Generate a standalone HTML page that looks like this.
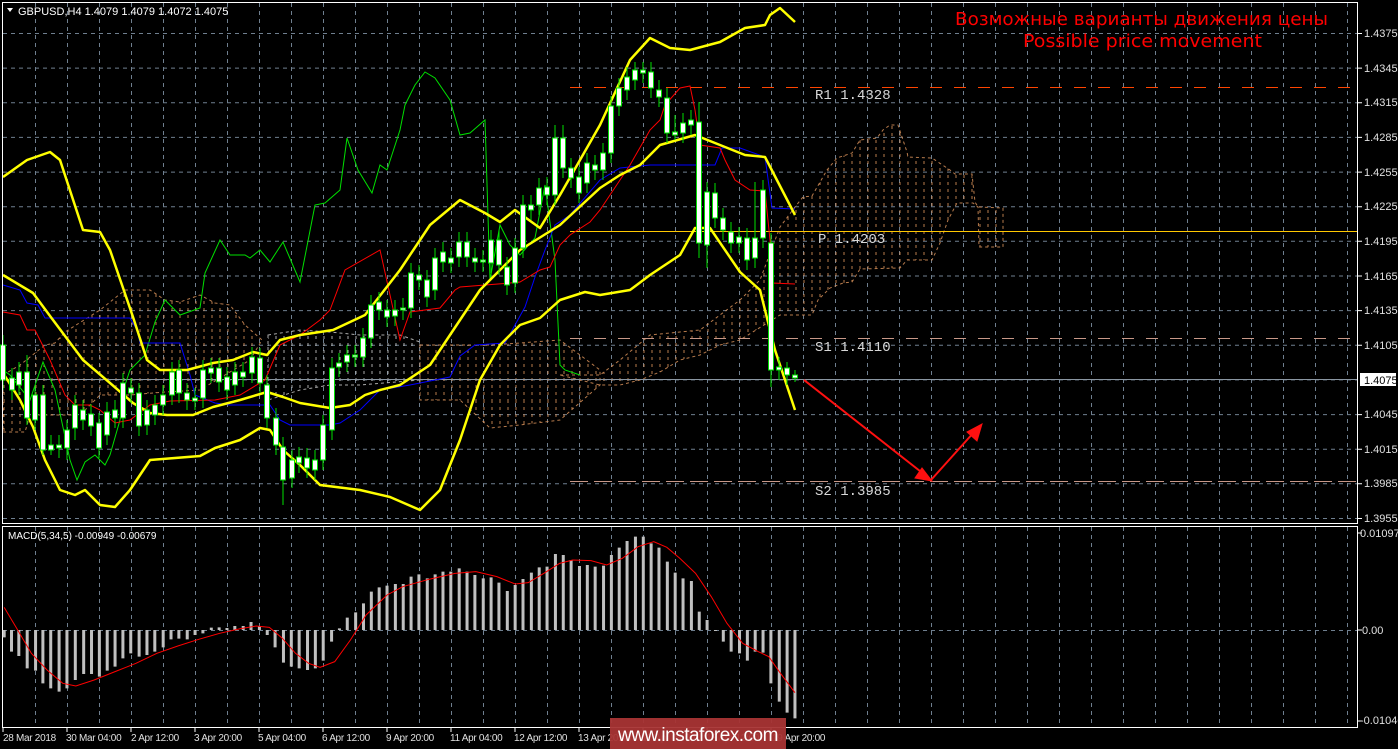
<!DOCTYPE html>
<html><head><meta charset="utf-8"><style>
html,body{margin:0;padding:0;background:#000;width:1398px;height:749px;overflow:hidden}
svg{display:block}
text{font-family:"Liberation Sans",sans-serif}
text.mono{font-family:"Liberation Mono","DejaVu Sans Mono",monospace}
text.dv{font-family:"DejaVu Sans","Liberation Sans",sans-serif}
</style></head><body>
<svg width="1398" height="749" viewBox="0 0 1398 749" xmlns="http://www.w3.org/2000/svg">
<defs>
<pattern id="hp" width="8" height="400" patternUnits="userSpaceOnUse"><line x1="4" y1="0" x2="4" y2="400" stroke="#d8915a" stroke-width="1" stroke-dasharray="3 4"/></pattern>
<pattern id="hw" width="8" height="400" patternUnits="userSpaceOnUse"><line x1="4" y1="0" x2="4" y2="400" stroke="#c8c8c8" stroke-width="1" stroke-dasharray="3 4"/></pattern>
</defs>
<rect width="1398" height="749" fill="#000"/>
<!-- grid main -->
<g stroke="#6f7f8f" stroke-width="1" stroke-dasharray="4 4">
<path d="M3 33.5H1357M3 68.1H1357M3 102.8H1357M3 137.4H1357M3 172.1H1357M3 206.7H1357M3 241.3H1357M3 276H1357M3 310.6H1357M3 345.3H1357M3 379.9H1357M3 414.6H1357M3 449.2H1357M3 483.8H1357M3 518.5H1357"/>
<path d="M35.5 3V523M67.5 3V523M99.5 3V523M131.5 3V523M163.5 3V523M195.5 3V523M227.5 3V523M259.5 3V523M291.5 3V523M323.5 3V523M355.5 3V523M387.5 3V523M419.5 3V523M451.5 3V523M483.5 3V523M515.5 3V523M547.5 3V523M579.5 3V523M611.5 3V523M643.5 3V523M675.5 3V523M707.5 3V523M739.5 3V523M771.5 3V523M803.5 3V523M835.5 3V523M867.5 3V523M899.5 3V523M931.5 3V523M963.5 3V523M995.5 3V523M1027.5 3V523M1059.5 3V523M1091.5 3V523M1123.5 3V523M1155.5 3V523M1187.5 3V523M1219.5 3V523M1251.5 3V523M1283.5 3V523M1315.5 3V523M1347.5 3V523"/>
<path d="M35.5 527V727M67.5 527V727M99.5 527V727M131.5 527V727M163.5 527V727M195.5 527V727M227.5 527V727M259.5 527V727M291.5 527V727M323.5 527V727M355.5 527V727M387.5 527V727M419.5 527V727M451.5 527V727M483.5 527V727M515.5 527V727M547.5 527V727M579.5 527V727M611.5 527V727M643.5 527V727M675.5 527V727M707.5 527V727M739.5 527V727M771.5 527V727M803.5 527V727M835.5 527V727M867.5 527V727M899.5 527V727M931.5 527V727M963.5 527V727M995.5 527V727M1027.5 527V727M1059.5 527V727M1091.5 527V727M1123.5 527V727M1155.5 527V727M1187.5 527V727M1219.5 527V727M1251.5 527V727M1283.5 527V727M1315.5 527V727M1347.5 527V727"/>
<path d="M3 630.5H1357"/>
</g>
<!-- clouds -->
<g stroke="#d8915a" stroke-width="1" stroke-dasharray="3 3" opacity="0.85">
<polygon fill="url(#hp)" points="3,375 20,365 30,357 45,345 55,343 65,332 100,310 125,290 150,290 165,300 180,302 200,295 215,303 230,305 245,325 262,340 250,360 200,390 165,392 130,395 100,395 80,415 30,415 25,432 3,432"/>
<polygon fill="url(#hw)" stroke="#c8c8c8" points="268,335 300,330 330,332 360,335 400,335 420,342 420,380 360,385 330,385 300,390 268,400"/>
<polygon fill="url(#hp)" points="420,345 450,345 490,345 520,343 560,340 600,370 600,385 560,420 520,425 490,428 460,400 420,400"/>
<polygon fill="url(#hp)" points="560,375 600,375 620,360 650,335 700,330 720,315 740,300 760,280 780,227 795,207 803,197 812,196 827,170 837,158 852,153 860,140 877,138 883,130 890,125 898,125 907,152 908,157 932,158 950,170 955,174 972,174 975,202 978,207 1003,208 1003,247 979,247 978,207 973,203 957,203 948,220 940,243 932,260 907,260 900,268 860,269 852,282 843,283 830,288 818,300 812,315 780,315 740,340 720,345 700,355 680,360 660,372 640,380 620,385 600,385"/>
</g>
<!-- levels -->
<path d="M570 87.5H1357" stroke="#ff4500" stroke-width="1" stroke-dasharray="12 12"/>
<path d="M570 231.5H1357" stroke="#ffc800" stroke-width="1"/>
<path d="M570 338.5H1357" stroke="#c89888" stroke-width="1" stroke-dasharray="12 12"/>
<path d="M570 481.5H1357" stroke="#c89888" stroke-width="1" stroke-dasharray="18 6"/>
<path d="M3 379.5H1357" stroke="#8a96a2" stroke-width="1"/>
<!-- green chikou -->
<polyline fill="none" stroke="#00e000" stroke-width="1" points="3,370 10,375 30,400 43,362 55,390 70,460 77,480 85,462 95,455 105,465 110,455 120,420 125,385 130,370 145,355 155,322 165,300 180,315 200,308 205,273 220,240 230,255 245,255 250,258 260,250 270,262 283,242 300,282 315,205 325,203 340,190 347,138 358,170 372,193 380,165 387,170 400,130 405,105 415,85 425,72 435,78 450,100 460,135 470,133 485,120 490,280 500,225 510,245 520,255 535,238 545,185 555,260 560,365 565,370 580,375"/>
<!-- blue kijun -->
<polyline fill="none" stroke="#0000ff" stroke-width="1" points="3,285 20,290 27,303 38,305 45,318 130,318 137,330 140,343 180,343 190,375 195,395 215,403 230,405 270,405 280,420 290,425 330,425 340,423 360,410 380,390 410,385 450,377 460,356 475,345 505,343 515,325 525,307 535,277 545,250 555,225 570,215 600,180 620,168 650,165 715,165 722,148 740,148 765,157 772,208 795,209"/>
<!-- red tenkan -->
<polyline fill="none" stroke="#ff0000" stroke-width="1" points="3,312 20,315 27,330 35,330 50,360 65,395 75,405 90,405 100,410 115,423 130,420 150,405 170,401 215,400 240,395 265,380 280,345 300,335 320,320 330,310 345,270 380,250 400,340 410,312 440,308 455,290 460,287 510,283 520,282 540,270 550,267 560,245 570,235 590,222 600,210 620,180 630,165 650,130 660,120 665,105 680,88 690,86 695,110 700,145 720,148 725,160 735,180 750,190 765,191 770,240 772,283 795,284"/>
<!-- yellow bands -->
<g fill="none" stroke="#ffff00" stroke-width="2.5" stroke-linejoin="round">
<polyline points="3,177 27,160 50,152 60,160 83,230 100,232 110,250 133,317 147,360 160,370 187,370 213,363 233,360 253,352 267,355 280,340 300,335 333,330 365,315 400,270 430,225 460,200 485,213 500,222 515,210 540,228 560,195 600,125 630,60 650,38 670,48 690,50 720,42 745,28 765,25 770,15 780,8 795,22"/>
<polyline points="3,275 33,293 53,320 83,360 110,383 133,403 150,413 167,415 193,415 213,407 240,400 267,392 283,397 300,403 330,408 350,405 365,395 380,390 400,385 430,365 480,290 520,250 560,225 600,188 620,175 640,165 660,145 695,135 720,145 745,155 765,157 795,215"/>
<polyline points="3,373 20,400 33,427 45,460 60,490 75,495 85,490 100,505 115,507 130,490 150,460 175,458 200,456 215,448 240,440 260,428 270,430 283,450 300,465 320,485 360,490 390,497 420,510 440,490 460,440 480,380 500,345 520,325 540,318 560,300 585,292 600,295 630,290 650,275 680,255 695,228 710,228 740,272 760,290 775,350 795,410"/>
</g>
<!-- candle wicks -->
<path stroke="#00e000" stroke-width="1" fill="none" d="M3 335V390M12 368V400M19 362V395M27 355V425M35 385V430M43 385V455M51 435V455M59 435V458M67 420V460M75 395V440M83 400V430M91 404V436M99 413V458M107 402V445M115 400V428M123 373V428M131 378V403M139 383V436M147 400V435M155 395V425M163 385V415M172 362V405M179 360V403M187 383V410M195 388V410M203 360V408M211 358V383M219 358V392M227 367V400M235 362V395M243 362V387M252 347V383M260 348V393M267 375V428M276 408V455M283 437V505M292 450V488M299 447V473M307 448V478M315 450V480M323 415V470M332 358V440M339 353V377M347 345V372M355 345V367M363 328V367M371 295V348M379 292V320M387 300V327M395 300V326M403 298V320M411 263V318M419 265V290M427 270V307M435 248V300M443 242V272M451 248V273M459 232V267M467 232V267M475 248V272M483 250V272M491 230V273M499 230V275M507 257V295M515 238V293M523 195V258M531 195V220M539 178V215M547 177V205M555 125V205M563 125V178M571 158V188M579 167V203M587 153V193M595 155V180M603 143V180M611 96V163M619 78V116M627 67V100M635 62V90M643 62V83M651 62V98M659 80V107M667 88V143M675 115V140M683 113V143M691 110V135M699 102V258M707 182V268M715 183V228M723 208V240M731 222V253M739 227V253M747 228V270M755 182V268M763 180V248M771 233V387M779 357V380M787 362V385M795 370V382"/>
<!-- candle bodies -->
<g fill="#fff" stroke="#00e000" stroke-width="1">
<rect x="0.5" y="345" width="5" height="35"/><rect x="9.5" y="378" width="5" height="12"/><rect x="16.5" y="372" width="5" height="13"/><rect x="24.5" y="372" width="5" height="46"/><rect x="32.5" y="395" width="5" height="25"/><rect x="40.5" y="395" width="5" height="55"/><rect x="48.5" y="445" width="5" height="5"/><rect x="56.5" y="445" width="5" height="3"/><rect x="64.5" y="430" width="5" height="18"/><rect x="72.5" y="405" width="5" height="23"/><rect x="80.5" y="410" width="5" height="10"/><rect x="88.5" y="414" width="5" height="12"/><rect x="96.5" y="423" width="5" height="25"/><rect x="104.5" y="412" width="5" height="23"/><rect x="112.5" y="410" width="5" height="8"/><rect x="120.5" y="383" width="5" height="35"/><rect x="128.5" y="388" width="5" height="5"/><rect x="136.5" y="393" width="5" height="33"/><rect x="144.5" y="410" width="5" height="15"/><rect x="152.5" y="405" width="5" height="10"/><rect x="160.5" y="395" width="5" height="10"/><rect x="169.5" y="372" width="5" height="23"/><rect x="176.5" y="370" width="5" height="23"/><rect x="184.5" y="393" width="5" height="7"/><rect x="192.5" y="398" width="5" height="3"/><rect x="200.5" y="370" width="5" height="28"/><rect x="208.5" y="368" width="5" height="5"/><rect x="216.5" y="368" width="5" height="14"/><rect x="224.5" y="377" width="5" height="13"/><rect x="232.5" y="372" width="5" height="13"/><rect x="240.5" y="372" width="5" height="5"/><rect x="249.5" y="357" width="5" height="16"/><rect x="257.5" y="358" width="5" height="25"/><rect x="264.5" y="385" width="5" height="33"/><rect x="273.5" y="418" width="5" height="27"/><rect x="280.5" y="447" width="5" height="33"/><rect x="289.5" y="460" width="5" height="18"/><rect x="296.5" y="457" width="5" height="6"/><rect x="304.5" y="458" width="5" height="10"/><rect x="312.5" y="460" width="5" height="10"/><rect x="320.5" y="425" width="5" height="35"/><rect x="329.5" y="368" width="5" height="62"/><rect x="336.5" y="363" width="5" height="4"/><rect x="344.5" y="355" width="5" height="7"/><rect x="352.5" y="355" width="5" height="2"/><rect x="360.5" y="338" width="5" height="19"/><rect x="368.5" y="305" width="5" height="33"/><rect x="376.5" y="302" width="5" height="8"/><rect x="384.5" y="310" width="5" height="7"/><rect x="392.5" y="310" width="5" height="6"/><rect x="400.5" y="308" width="5" height="2"/><rect x="408.5" y="273" width="5" height="35"/><rect x="416.5" y="275" width="5" height="5"/><rect x="424.5" y="280" width="5" height="17"/><rect x="432.5" y="258" width="5" height="32"/><rect x="440.5" y="252" width="5" height="10"/><rect x="448.5" y="258" width="5" height="5"/><rect x="456.5" y="242" width="5" height="15"/><rect x="464.5" y="242" width="5" height="15"/><rect x="472.5" y="258" width="5" height="4"/><rect x="480.5" y="260" width="5" height="2"/><rect x="488.5" y="240" width="5" height="23"/><rect x="496.5" y="240" width="5" height="25"/><rect x="504.5" y="267" width="5" height="18"/><rect x="512.5" y="248" width="5" height="35"/><rect x="520.5" y="205" width="5" height="43"/><rect x="528.5" y="205" width="5" height="5"/><rect x="536.5" y="188" width="5" height="17"/><rect x="544.5" y="187" width="5" height="8"/><rect x="552.5" y="138" width="5" height="57"/><rect x="560.5" y="138" width="5" height="30"/><rect x="568.5" y="168" width="5" height="10"/><rect x="576.5" y="177" width="5" height="16"/><rect x="584.5" y="163" width="5" height="20"/><rect x="592.5" y="165" width="5" height="5"/><rect x="600.5" y="153" width="5" height="17"/><rect x="608.5" y="106" width="5" height="47"/><rect x="616.5" y="88" width="5" height="18"/><rect x="624.5" y="77" width="5" height="13"/><rect x="632.5" y="70" width="5" height="10"/><rect x="640.5" y="70" width="5" height="3"/><rect x="648.5" y="72" width="5" height="16"/><rect x="656.5" y="90" width="5" height="7"/><rect x="664.5" y="98" width="5" height="35"/><rect x="672.5" y="132" width="5" height="3"/><rect x="680.5" y="123" width="5" height="10"/><rect x="688.5" y="120" width="5" height="5"/><rect x="696.5" y="122" width="5" height="121"/><rect x="704.5" y="192" width="5" height="53"/><rect x="712.5" y="193" width="5" height="25"/><rect x="720.5" y="218" width="5" height="12"/><rect x="728.5" y="232" width="5" height="11"/><rect x="736.5" y="237" width="5" height="6"/><rect x="744.5" y="238" width="5" height="22"/><rect x="752.5" y="238" width="5" height="20"/><rect x="760.5" y="190" width="5" height="48"/><rect x="768.5" y="243" width="5" height="127"/><rect x="776.5" y="367" width="5" height="3"/><rect x="784.5" y="368" width="5" height="7"/><rect x="792.5" y="375" width="5" height="3"/>
</g>
<!-- level labels -->
<g fill="#d8d8d8" font-size="14">
<text class="mono" x="815" y="99">R1 1.4328</text>
<text class="mono" x="818" y="243">P 1.4203</text>
<text class="mono" x="815" y="351">S1 1.4110</text>
<text class="mono" x="815" y="495">S2 1.3985</text>
</g>
<!-- red arrows -->
<g stroke="#ff1010" stroke-width="2" fill="#ff1010">
<line x1="804" y1="380" x2="925" y2="475"/>
<polygon points="932,481 915,478 922,468" stroke-width="1"/>
<line x1="931" y1="480" x2="975" y2="431"/>
<polygon points="982,424 977,441 967,432" stroke-width="1"/>
</g>
<!-- title text -->
<text class="dv" x="955" y="25" fill="#ff0000" font-size="18" textLength="373" lengthAdjust="spacingAndGlyphs">Возможные варианты движения цены</text>
<text class="dv" x="1023" y="47" fill="#ff0000" font-size="18" textLength="239" lengthAdjust="spacingAndGlyphs">Possible price movement</text>
<!-- header -->
<polygon points="7,8 13,8 10,12" fill="#fff"/>
<text x="18" y="15" fill="#fff" font-size="11">GBPUSD,H4  1.4079 1.4079 1.4072 1.4075</text>
<!-- frames -->
<g fill="none" stroke="#fff" stroke-width="1">
<rect x="2.5" y="2.5" width="1355" height="521"/>
<rect x="2.5" y="526.5" width="1355" height="201"/>
</g>
<!-- right axis -->
<g fill="#e0e0e0" font-size="11">
<path d="M1358 33.5h4M1358 68.1h4M1358 102.8h4M1358 137.4h4M1358 172.1h4M1358 206.7h4M1358 241.3h4M1358 276h4M1358 310.6h4M1358 345.3h4M1358 414.6h4M1358 449.2h4M1358 483.8h4M1358 518.5h4M1358 533h4M1358 630h4M1358 721h4" stroke="#fff"/>
<text x="1364" y="37">1.4375</text><text x="1364" y="72">1.4345</text><text x="1364" y="106">1.4315</text><text x="1364" y="141">1.4285</text><text x="1364" y="176">1.4255</text><text x="1364" y="210">1.4225</text><text x="1364" y="245">1.4195</text><text x="1364" y="280">1.4165</text><text x="1364" y="314">1.4135</text><text x="1364" y="349">1.4105</text><text x="1364" y="418">1.4045</text><text x="1364" y="453">1.4015</text><text x="1364" y="487">1.3985</text><text x="1364" y="522">1.3955</text>
<rect x="1360" y="373" width="36" height="13" fill="#fff"/>
<text x="1364" y="384" fill="#000">1.4075</text>
<text x="1360" y="537">0.01097</text>
<text x="1362" y="634">0.00</text>
<text x="1360" y="724">-0.01046</text>
</g>
<!-- MACD -->
<text x="8" y="539" fill="#fff" font-size="10">MACD(5,34,5) -0.00949 -0.00679</text>
<g transform="translate(0,520) scale(0.523,0.3333)">
<path fill="none" stroke="#c0c0c0" stroke-width="3" vector-effect="non-scaling-stroke" d="M8 330V352M22 330V395M36 330V408M52 330V445M68 330V452M82 330V490M97 330V505M113 330V515M128 330V505M144 330V480M160 330V462M175 330V462M190 330V470M205 330V452M220 330V440M235 330V415M250 330V400M266 330V410M281 330V405M296 330V395M312 330V382M327 330V358M342 330V356M358 330V358M373 330V345M388 330V340M404 330V323M419 330V322M434 330V324M449 330V318M465 330V318M480 330V306M496 330V318M511 330V345M526 330V382M542 330V428M557 330V440M572 330V445M588 330V450M603 330V445M618 330V422M634 330V365M649 330V325M664 330V293M680 330V277M695 330V250M710 330V215M725 330V202M740 330V197M756 330V192M771 330V192M786 330V170M801 330V163M817 330V175M832 330V163M847 330V155M862 330V155M878 330V145M893 330V155M908 330V165M924 330V175M939 330V172M954 330V188M970 330V213M985 330V195M1000 330V177M1016 330V158M1031 330V142M1046 330V140M1062 330V102M1077 330V105M1092 330V120M1108 330V138M1123 330V135M1138 330V140M1154 330V137M1169 330V105M1184 330V83M1199 330V63M1215 330V50M1230 330V50M1245 330V70M1260 330V83M1276 330V125M1291 330V158M1306 330V175M1322 330V183M1337 330V275M1352 330V300M1368 330V333M1383 330V365M1398 330V395M1414 330V400M1429 330V422M1444 330V395M1459 330V398M1474 330V490M1490 330V545M1505 330V578M1520 330V595"/>
<polyline fill="none" stroke="#ff0000" stroke-width="1" vector-effect="non-scaling-stroke" points="8,262 30,320 60,400 90,450 120,490 145,498 180,480 220,455 260,430 300,400 340,378 380,358 420,340 460,326 490,318 515,322 540,355 565,400 590,430 612,442 640,425 670,360 700,285 740,225 770,200 820,178 870,160 910,155 950,170 985,192 1010,188 1040,160 1070,130 1095,120 1130,122 1160,135 1190,115 1220,80 1250,65 1275,82 1300,115 1330,160 1360,230 1390,310 1420,370 1450,395 1470,410 1490,455 1520,518"/>
</g>
<!-- bottom axis -->
<g fill="#e0e0e0" font-size="10" style="letter-spacing:-0.3px">
<path d="M3 728v4M67 728v4M131 728v4M195 728v4M259 728v4M323 728v4M387 728v4M451 728v4M515 728v4M579 728v4M643 728v4M707 728v4M771 728v4" stroke="#fff"/>
<text x="3" y="741">28 Mar 2018</text><text x="66" y="741">30 Mar 04:00</text><text x="131" y="741">2 Apr 12:00</text><text x="194" y="741">3 Apr 20:00</text><text x="258" y="741">5 Apr 04:00</text><text x="322" y="741">6 Apr 12:00</text><text x="386" y="741">9 Apr 20:00</text><text x="450" y="741">11 Apr 04:00</text><text x="514" y="741">12 Apr 12:00</text><text x="578" y="741">13 Apr 20:00</text><text x="642" y="741">17 Apr 04:00</text><text x="706" y="741">18 Apr 12:00</text><text x="772" y="741">19 Apr 20:00</text>
</g>
<!-- watermark -->
<rect x="610" y="718" width="176" height="31" fill="#a83434" opacity="0.95"/>
<text x="698" y="741" fill="#fff" font-size="19" text-anchor="middle" style="letter-spacing:-0.5px">www.instaforex.com</text>
</svg>
</body></html>
